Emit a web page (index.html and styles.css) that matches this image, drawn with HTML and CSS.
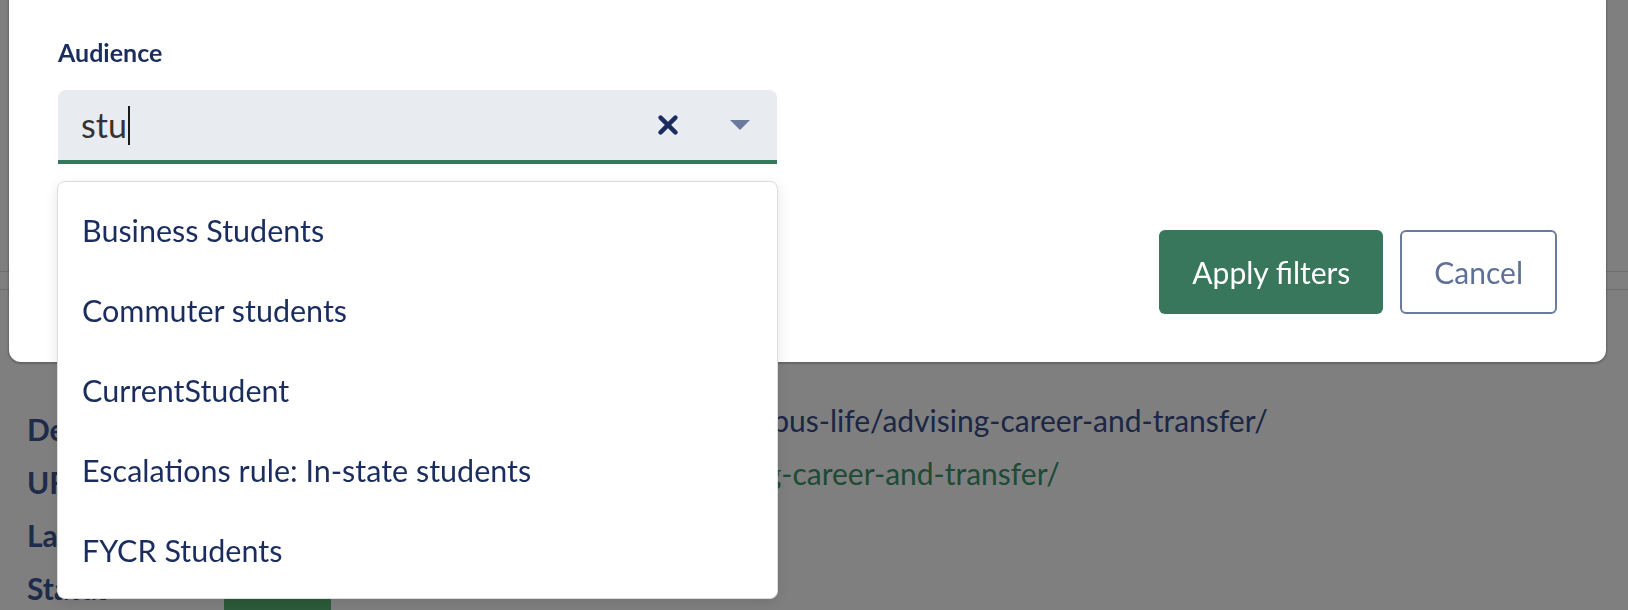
FILE: index.html
```html
<!DOCTYPE html>
<html lang="en">
<head>
<meta charset="utf-8">
<title>Filters</title>
<link rel="stylesheet" href="styles.css">
</head>
<body>
<div class="page">
  <div class="tabs-bar"></div>
  <dl class="details">
    <dt>Destination</dt>
    <dd class="val">https://www.valleycollege.edu/home/campus-life/advising-career-and-transfer/</dd>
    <dt>URL</dt>
    <dd class="val link">https://www.nvc.edu/campus-life/advising-career-and-transfer/</dd>
    <dt>Last updated</dt>
    <dd class="val">Mar 14, 2024</dd>
    <dt>Status</dt>
    <dd><span class="badge">Active</span></dd>
  </dl>
</div>

<div class="overlay"></div>

<div class="modal" role="dialog" aria-label="Filters">
  <div class="field">
    <label class="field-label">Audience</label>
    <div class="combo">
      <div class="combo-input"><span class="typed">stu</span><span class="caret"></span></div>
      <span class="clear" aria-label="Clear">
        <svg width="20" height="20" viewBox="0 0 20 20"><path d="M2.6 2.6 L17.4 17.4 M17.4 2.6 L2.6 17.4" stroke="#1a2d5e" stroke-width="4.4" stroke-linecap="round"/></svg>
      </span>
      <span class="toggle">
        <svg width="20" height="10" viewBox="0 0 20 10"><path d="M0 0 H20 L10 10 Z" fill="#6b7a9c"/></svg>
      </span>
      <ul class="menu">
        <li>Business Students</li>
        <li>Commuter students</li>
        <li>CurrentStudent</li>
        <li>Escalations rule: In-state students</li>
        <li>FYCR Students</li>
      </ul>
    </div>
  </div>
  <div class="actions">
    <button class="btn btn-primary">Apply filters</button>
    <button class="btn btn-secondary">Cancel</button>
  </div>
</div>
</body>
</html>
```
FILE: styles.css
```css
html, body {
  margin: 0;
  height: 610px;
  overflow: hidden;
}

body {
  font-family: Lato, "Open Sans", sans-serif;
  background: #ffffff;
}

/* ---------- background page ---------- */
.tabs-bar {
  margin-top: 271px;
  height: 17px;
  border-top: 1px solid #dcdcdc;
  border-bottom: 1px solid #dcdcdc;
}

.details {
  margin: 121px 0 0 0;
  padding-left: 27px;
  display: grid;
  grid-template-columns: 197px 1fr;
  row-gap: 17px;
}

.details dt {
  font-weight: 700;
  font-size: 30px;
  line-height: 36px;
  color: #3e5694;
}

.details dd {
  margin: 0;
  font-size: 30px;
  line-height: 36px;
  color: #384c8a;
  white-space: nowrap;
}

.details .val {
  margin-top: -9px;
}

.details .link {
  color: #3c946c;
}

.badge {
  display: inline-block;
  margin-top: 27px;
  padding: 0 20px;
  height: 56px;
  line-height: 56px;
  border-radius: 4px;
  background: #58b676;
  color: #fff;
  font-size: 24px;
}

.overlay {
  position: fixed;
  inset: 0;
  background: rgba(0, 0, 0, 0.5);
}

/* ---------- modal ---------- */
.modal {
  position: fixed;
  top: 0;
  left: 9px;
  width: 1597px;
  box-sizing: border-box;
  padding: 36px 49px 48px 49px;
  background: #ffffff;
  border-radius: 0 0 12px 12px;
  box-shadow: 0 1px 2px 1px rgba(0, 0, 0, 0.22);
}

.field-label {
  display: block;
  font-weight: 700;
  font-size: 25px;
  line-height: 32px;
  color: #1a2d5e;
  margin-bottom: 22px;
}

.combo {
  position: relative;
  width: 719px;
  height: 74px;
  box-sizing: border-box;
  display: flex;
  align-items: center;
  padding: 0 27px 0 23px;
  background: #e8ebf0;
  border-bottom: 4px solid #37785c;
  border-radius: 8px 8px 0 0;
}

.combo-input {
  flex: 1;
  display: flex;
  align-items: center;
  font-size: 34px;
  line-height: 44px;
  color: #333333;
}

.caret {
  width: 2px;
  height: 39px;
  margin-left: 1px;
  background: #1a1a1a;
}

.clear {
  display: flex;
  margin-right: 52px;
}

.toggle {
  display: flex;
}

.menu {
  position: absolute;
  top: 91px;
  left: -1px;
  width: 721px;
  box-sizing: border-box;
  margin: 0;
  padding: 8px 0;
  list-style: none;
  background: #ffffff;
  border: 1px solid #dcdcdc;
  border-radius: 8px;
  box-shadow: 0 4px 14px rgba(0, 0, 0, 0.10);
  z-index: 2;
}

.menu li {
  height: 80px;
  line-height: 80px;
  padding-left: 24px;
  font-size: 30.5px;
  color: #1a2d5e;
  white-space: nowrap;
}

.actions {
  display: flex;
  justify-content: flex-end;
  gap: 17px;
  margin-top: 66px;
}

.btn {
  height: 84px;
  box-sizing: border-box;
  padding: 0 32px;
  font-family: inherit;
  font-size: 30px;
  border-radius: 6px;
  cursor: pointer;
}

.btn-primary {
  padding: 0 33px;
  background: #38775c;
  color: #ffffff;
  border: none;
}

.btn-secondary {
  background: #ffffff;
  color: #5f7096;
  border: 2px solid #6b7ba0;
}
```
